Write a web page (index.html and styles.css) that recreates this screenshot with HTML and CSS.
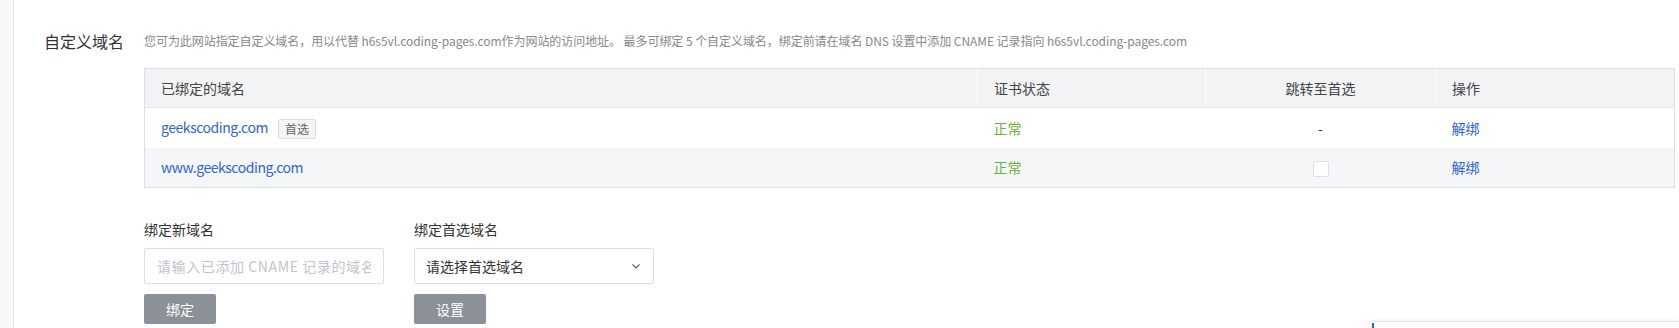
FILE: index.html
```html
<!DOCTYPE html>
<html lang="zh-CN">
<head>
    <meta charset="UTF-8">
    <title>自定义域名</title>
    <link rel="stylesheet" href="styles.css">
</head>
<body>
    <div class="page">
        <div class="side-strip"></div>

        <div class="main">
            <div class="section">
                <div class="section-title">自定义域名</div>
                <div class="section-body">
                    <p class="section-desc">您可为此网站指定自定义域名，用以代替 h6s5vl.coding-pages.com作为网站的访问地址。 最多可绑定 5 个自定义域名，绑定前请在域名 DNS 设置中添加 CNAME 记录指向 h6s5vl.coding-pages.com</p>

                    <table class="domain-table">
                        <colgroup>
                            <col class="col-domain">
                            <col class="col-cert">
                            <col class="col-redirect">
                            <col class="col-action">
                        </colgroup>
                        <thead>
                            <tr>
                                <th>已绑定的域名</th>
                                <th>证书状态</th>
                                <th class="center">跳转至首选</th>
                                <th>操作</th>
                            </tr>
                        </thead>
                        <tbody>
                            <tr>
                                <td><a class="link domain">geekscoding.com</a><span class="tag">首选</span></td>
                                <td class="status-ok">正常</td>
                                <td class="center dash">-</td>
                                <td><a class="link">解绑</a></td>
                            </tr>
                            <tr class="row-hover">
                                <td><a class="link domain">www.geekscoding.com</a></td>
                                <td class="status-ok">正常</td>
                                <td class="center"><span class="checkbox"></span></td>
                                <td><a class="link">解绑</a></td>
                            </tr>
                        </tbody>
                    </table>

                    <div class="form-row">
                        <div class="form-group">
                            <label class="form-label">绑定新域名</label>
                            <input class="text-input" type="text" placeholder="请输入已添加 CNAME 记录的域名">
                            <button class="btn">绑定</button>
                        </div>
                        <div class="form-group">
                            <label class="form-label">绑定首选域名</label>
                            <div class="select">
                                <span>请选择首选域名</span>
                                <svg class="chevron" width="8" height="5" viewBox="0 0 8 5">
                                    <path d="M0.5 0.5 L4 4 L7.5 0.5" fill="none" stroke="#555" stroke-width="1.1"/>
                                </svg>
                            </div>
                            <button class="btn">设置</button>
                        </div>
                    </div>
                </div>
            </div>
        </div>
    </div>

    <!-- edge of a floating panel peeking in at the bottom -->
    <div class="float-panel"><span class="float-mark"></span></div>
</body>
</html>
```

FILE: styles.css
```css
* {
    margin: 0;
    padding: 0;
    box-sizing: border-box;
}

html, body {
    height: 100%;
    width: 100%;
}

body {
    font-family: "Noto Sans CJK SC", "Noto Sans", sans-serif;
    color: #333;
    background: #fff;
    overflow: hidden;
}

.page {
    display: flex;
    min-height: 100%;
}

.side-strip {
    width: 14px;
    flex-shrink: 0;
    background: #f7f8fa;
    border-right: 1px solid #e4e6ea;
}

.main {
    flex: 1;
    padding: 29px 4px 0 30px;
}

.section {
    display: flex;
}

.section-title {
    width: 100px;
    flex-shrink: 0;
    font-size: 16px;
    line-height: 24px;
    color: #333;
}

.section-body {
    flex: 1;
}

.section-desc {
    font-size: 12px;
    line-height: 24px;
    color: #888;
    letter-spacing: -0.06px;
    white-space: nowrap;
}

.domain-table {
    width: 100%;
    margin-top: 15px;
    border-collapse: collapse;
    table-layout: fixed;
    border: 1px solid #dcdfe4;
    font-size: 14px;
}

.col-domain { width: 833px; }
.col-cert { width: 228px; }
.col-redirect { width: 230px; }

.domain-table th {
    height: 39px;
    padding: 0 16px;
    text-align: left;
    font-weight: normal;
    color: #444;
    background: #f2f3f5;
    border-right: 1px solid #fafbfc;
    border-bottom: 1px solid #e3e5e8;
}

.domain-table th:last-child {
    border-right: none;
}

.domain-table td {
    height: 40px;
    padding: 0 16px;
    vertical-align: middle;
}

.domain-table .center {
    text-align: center;
}

.row-hover td {
    background: #f5f6f8;
}

.link {
    color: #3164d4;
    cursor: pointer;
    text-decoration: none;
}

.domain {
    letter-spacing: -0.45px;
}

.tag {
    display: inline-block;
    margin-left: 10px;
    padding: 0 6px;
    height: 20px;
    line-height: 18px;
    font-size: 12px;
    color: #666;
    background: #f4f5f7;
    border: 1px solid #dcdfe4;
    border-radius: 2px;
    vertical-align: middle;
}

.status-ok {
    color: #6cb33e;
}

.dash {
    color: #333;
}

.checkbox {
    display: inline-block;
    width: 16px;
    height: 16px;
    background: #fff;
    border: 1px solid #dcdfe4;
    border-radius: 2px;
    vertical-align: middle;
}

.form-row {
    display: flex;
    gap: 30px;
    margin-top: 31px;
}

.form-group {
    display: flex;
    flex-direction: column;
    align-items: flex-start;
    width: 240px;
}

.form-label {
    font-size: 14px;
    line-height: 20px;
    color: #333;
}

.text-input {
    width: 240px;
    height: 36px;
    margin-top: 9px;
    padding: 0 12px;
    font-family: inherit;
    font-size: 14px;
    color: #333;
    border: 1px solid #dcdfe4;
    border-radius: 2px;
    outline: none;
}

.text-input::placeholder {
    color: #c0c4cc;
    letter-spacing: 0.6px;
}

.select {
    width: 240px;
    height: 36px;
    margin-top: 9px;
    padding: 0 13px 0 11px;
    display: flex;
    align-items: center;
    justify-content: space-between;
    font-size: 14px;
    color: #333;
    border: 1px solid #dcdfe4;
    border-radius: 2px;
    cursor: pointer;
}

.btn {
    width: 72px;
    height: 30px;
    margin-top: 10px;
    font-family: inherit;
    font-size: 14px;
    color: #fff;
    background: #8b9099;
    border: none;
    border-radius: 2px;
    cursor: pointer;
}

.float-panel {
    position: absolute;
    left: 1372px;
    top: 321px;
    right: 0;
    height: 20px;
    background: #fff;
    border-top: 1px solid #e3e5e8;
    box-shadow: 0 -1px 4px rgba(0, 0, 0, 0.06);
}

.float-mark {
    position: absolute;
    left: 0;
    top: 1px;
    width: 2px;
    height: 8px;
    background: #2f5fd0;
}
```
